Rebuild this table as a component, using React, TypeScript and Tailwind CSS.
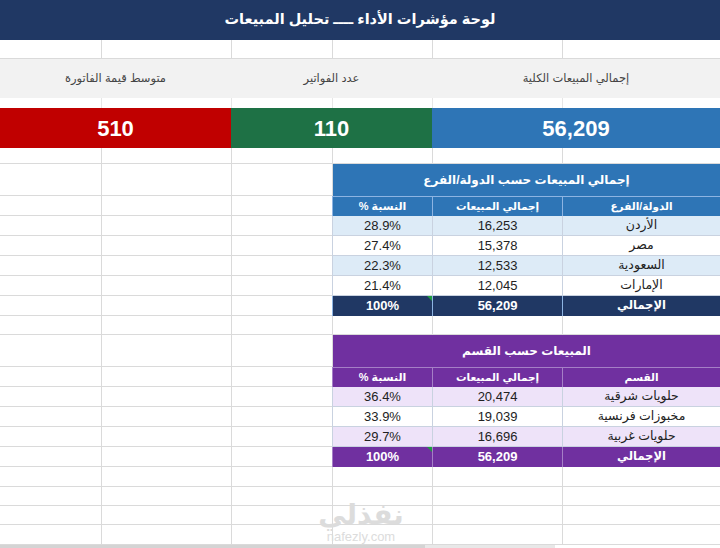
const W = ["w-[158px]", "w-[130px]", "w-[100px]", "w-[101px]", "w-[130px]", "w-[101px]"];

function GridRow({ h, from = 0 }: { h: string; from?: number }) {
  return (
    <div className={`flex ${h}`}>
      {W.slice(from).map((w, i) => (
        <div
          key={i}
          className={`${w} shrink-0 border-b border-[#dadada] ${i + from < 5 ? "border-l" : ""}`}
        />
      ))}
    </div>
  );
}

type Theme = {
  head: string;
  stripe: string;
  total: string;
  sep: string;
};

const blue: Theme = {
  head: "bg-[#2e75b6]",
  stripe: "bg-[#ddebf7]",
  total: "bg-[#203864]",
  sep: "border-[#8db4e2]",
};

const purple: Theme = {
  head: "bg-[#7030a0]",
  stripe: "bg-[#eee3f9]",
  total: "bg-[#7030a0]",
  sep: "border-[#a57fc6]",
};

function EmptyLeft() {
  return (
    <>
      {W.slice(3).map((w, i) => (
        <div key={i} className={`${w} shrink-0 border-b border-[#dadada] ${i < 2 ? "border-l" : ""}`} />
      ))}
    </>
  );
}

function SalesTable({
  theme,
  title,
  firstCol,
  rows,
  total,
}: {
  theme: Theme;
  title: string;
  firstCol: string;
  rows: [string, string, string][];
  total: [string, string];
}) {
  return (
    <>
      <div className="flex h-[32px]">
        <div
          className={`w-[388px] shrink-0 ${theme.head} border-l border-[#dadada] flex items-center justify-center text-white font-bold text-[12px]`}
        >
          {title}
        </div>
        <EmptyLeft />
      </div>
      <div className="flex h-[20px]">
        {[firstCol, "إجمالي المبيعات", "النسبة %"].map((t, i) => (
          <div
            key={i}
            className={`${W[i]} shrink-0 ${theme.head} border-l border-t ${theme.sep} flex items-center justify-center text-white font-bold ${i === 2 ? "text-[11px]" : "text-[10.5px]"}`}
          >
            {t}
          </div>
        ))}
        <EmptyLeft />
      </div>
      {rows.map((r, ri) => (
        <div key={ri} className="flex h-[20px]">
          {r.map((t, i) => (
            <div
              key={i}
              className={`${W[i]} shrink-0 ${ri % 2 === 0 ? theme.stripe : "bg-white"} border-l border-b border-[#c9d2e0] flex items-center justify-center text-[#222] ${i === 0 ? "text-[12.5px]" : "text-[13px]"}`}
            >
              {t}
            </div>
          ))}
          <EmptyLeft />
        </div>
      ))}
      <div className="flex h-[20px]">
        {["الإجمالي", total[0], total[1]].map((t, i) => (
          <div
            key={i}
            className={`${W[i]} shrink-0 ${theme.total} relative border-l ${theme.sep} flex items-center justify-center text-white font-bold ${i === 0 ? "text-[11.5px]" : "text-[13px]"}`}
          >
            {t}
            {i === 2 && (
              <span className="absolute top-0 right-0 w-0 h-0 border-t-[5px] border-t-[#1e9e3e] border-l-[5px] border-l-transparent" />
            )}
          </div>
        ))}
        <EmptyLeft />
      </div>
    </>
  );
}

export default function App() {
  return (
    <div
      dir="rtl"
      className="relative w-[720px] h-[548px] overflow-hidden bg-white"
      style={{ fontFamily: '"Liberation Sans", "DejaVu Sans", Arial, sans-serif' }}
    >
      <div className="h-[40px] bg-[#203864] flex items-center justify-center text-white font-bold text-[14.5px]">
        لوحة مؤشرات الأداء ــــ تحليل المبيعات
      </div>
      <GridRow h="h-[19px]" />
      <div className="flex h-[39px] bg-[#f2f2f2] text-[#444] text-[11.5px]">
        <div className="w-[288px] shrink-0 flex items-center justify-center">إجمالي المبيعات الكلية</div>
        <div className="w-[201px] shrink-0 flex items-center justify-center">عدد الفواتير</div>
        <div className="w-[231px] shrink-0 flex items-center justify-center">متوسط قيمة الفاتورة</div>
      </div>
      <div className="flex h-[10px]">
        {W.map((w, i) => (
          <div key={i} className={`${w} shrink-0 ${i < 5 ? "border-l" : ""} border-[#e6e6e6]`} />
        ))}
      </div>
      <div className="flex h-[40px] text-white font-bold text-[22px]">
        <div className="w-[288px] shrink-0 bg-[#2e75b6] flex items-center justify-center">56,209</div>
        <div className="w-[201px] shrink-0 bg-[#1e7145] flex items-center justify-center">110</div>
        <div className="w-[231px] shrink-0 bg-[#c00000] flex items-center justify-center">510</div>
      </div>
      <GridRow h="h-[16px]" />
      <SalesTable
        theme={blue}
        title="إجمالي المبيعات حسب الدولة/الفرع"
        firstCol="الدولة/الفرع"
        rows={[
          ["الأردن", "16,253", "28.9%"],
          ["مصر", "15,378", "27.4%"],
          ["السعودية", "12,533", "22.3%"],
          ["الإمارات", "12,045", "21.4%"],
        ]}
        total={["56,209", "100%"]}
      />
      <GridRow h="h-[19px]" />
      <SalesTable
        theme={purple}
        title="المبيعات حسب القسم"
        firstCol="القسم"
        rows={[
          ["حلويات شرقية", "20,474", "36.4%"],
          ["مخبوزات فرنسية", "19,039", "33.9%"],
          ["حلويات غربية", "16,696", "29.7%"],
        ]}
        total={["56,209", "100%"]}
      />
      <GridRow h="h-[20px]" />
      <GridRow h="h-[19px]" />
      <GridRow h="h-[19px]" />
      <GridRow h="h-[20px]" />
      <div className="flex h-[3px] bg-[#e8e8e8]">
        <div className="w-[165px] bg-white" />
        <div className="w-[130px]" />
        <div className="flex-1 bg-[#d4d4d4]" />
      </div>
      <div className="absolute left-[316px] top-[500px] w-[90px] flex flex-col items-center text-[#dcdcdc] pointer-events-none">
        <span className="text-[28px] font-bold leading-[30px]">نفذلي</span>
        <span className="text-[13px] leading-[14px]" dir="ltr">nafezly.com</span>
      </div>
    </div>
  );
}
